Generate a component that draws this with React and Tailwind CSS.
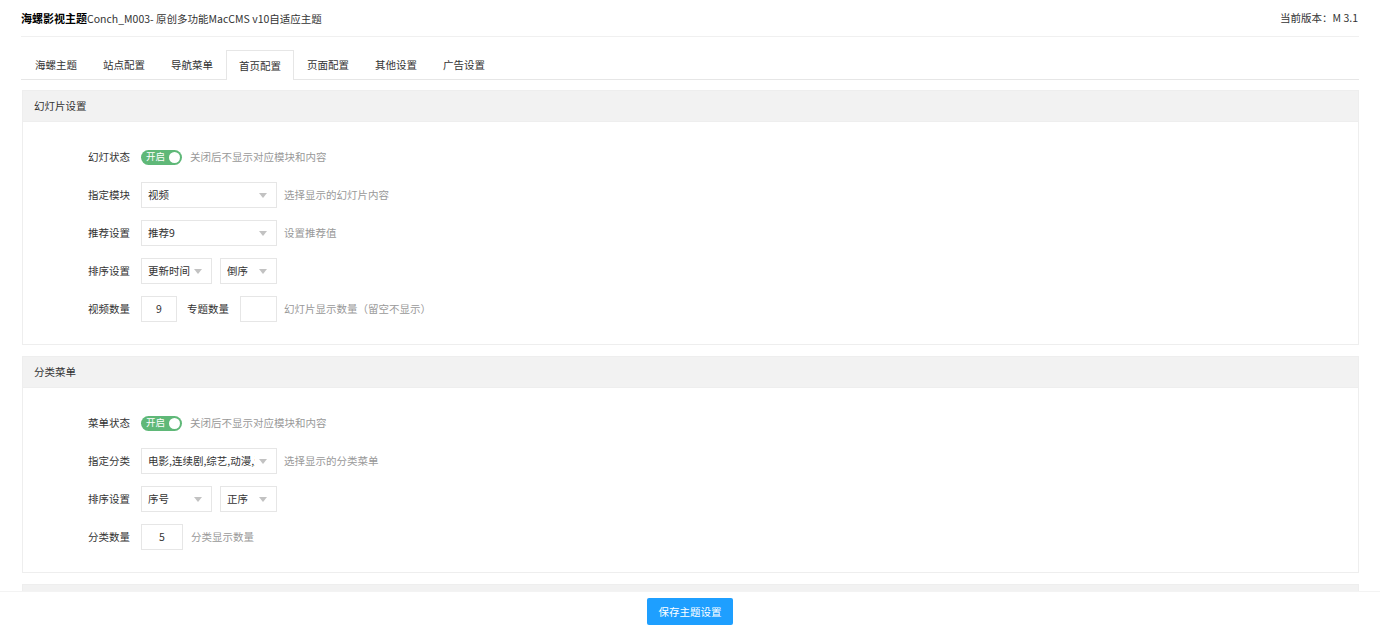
import React from "react";

const font = { fontFamily: '"Noto Sans CJK SC", "Microsoft YaHei", sans-serif' };

function Label({ children }) {
  return (
    <div className="w-[118px] shrink-0 pr-[11px] text-right text-[10.5px] text-[#333]">{children}</div>
  );
}

function Help({ children, className = "" }) {
  return <div className={"text-[10.5px] text-[#999] " + className}>{children}</div>;
}

function Switch() {
  return (
    <div className="flex h-[15px] w-[41px] items-center justify-between rounded-full bg-[#5FB878] pl-[5px] pr-[2px]">
      <span className="text-[9.5px] leading-none text-white">开启</span>
      <span className="h-[11px] w-[11px] rounded-full bg-white"></span>
    </div>
  );
}

function Select({ value, w }) {
  return (
    <div
      className={"flex h-[26px] items-center justify-between border border-[#e6e6e6] bg-white pl-[6px] pr-[9px] " + w}
    >
      <span className="overflow-hidden whitespace-nowrap text-[10.5px] text-[#333]">{value}</span>
      <span className="ml-[4px] h-0 w-0 shrink-0 border-l-[4px] border-r-[4px] border-t-[5px] border-l-transparent border-r-transparent border-t-[#c2c2c2]"></span>
    </div>
  );
}

function Input({ value, w }) {
  return (
    <div className={"flex h-[26px] items-center justify-center border border-[#e6e6e6] bg-white text-[10.5px] text-[#333] " + w}>
      {value}
    </div>
  );
}

function Row({ label, children }) {
  return (
    <div className="flex h-[26px] items-center">
      <Label>{label}</Label>
      {children}
    </div>
  );
}

function Panel({ title, children }) {
  return (
    <div className="border border-[#eeeeee] bg-white">
      <div className="flex h-[31px] items-center border-b border-[#eeeeee] bg-[#f2f2f2] pl-[11px] text-[10.5px] text-[#333]">
        {title}
      </div>
      <div className="flex flex-col gap-[12px] pb-[22px] pt-[22px]">{children}</div>
    </div>
  );
}

export default function App() {
  const tabs = ["海螺主题", "站点配置", "导航菜单", "首页配置", "页面配置", "其他设置", "广告设置"];
  return (
    <div className="flex h-screen flex-col overflow-hidden bg-white" style={font}>
      <div className="flex-1 overflow-hidden px-[21px]">
        <div className="flex h-[37px] items-center justify-between border-b border-[#f0f0f0]">
          <div className="text-[10.5px] text-[#333]">
            <span className="text-[11px] font-bold text-black">海螺影视主题</span>Conch_M003- 原创多功能MacCMS v10自适应主题
          </div>
          <div className="pr-[1px] text-[10.5px] text-[#333]">当前版本：M 3.1</div>
        </div>
        <div className="mt-[13px] flex h-[30px] border-b border-[#e6e6e6] pl-[1px]">
          {tabs.map((t, i) =>
            i === 3 ? (
              <div
                key={t}
                className="-mb-px flex h-[30px] w-[68px] items-center justify-center border border-b-0 border-[#e6e6e6] bg-white text-[10.5px] text-[#333]"
              >
                {t}
              </div>
            ) : (
              <div key={t} className="flex h-[29px] w-[68px] items-center justify-center text-[10.5px] text-[#333]">
                {t}
              </div>
            )
          )}
        </div>
        <div className="mt-[10px] flex flex-col gap-[11px] pl-[1px]">
          <Panel title="幻灯片设置">
            <Row label="幻灯状态">
              <Switch />
              <Help className="ml-[8px]">关闭后不显示对应模块和内容</Help>
            </Row>
            <Row label="指定模块">
              <Select value="视频" w="w-[136px]" />
              <Help className="ml-[7px]">选择显示的幻灯片内容</Help>
            </Row>
            <Row label="推荐设置">
              <Select value="推荐9" w="w-[136px]" />
              <Help className="ml-[7px]">设置推荐值</Help>
            </Row>
            <Row label="排序设置">
              <Select value="更新时间" w="w-[71px]" />
              <div className="w-[8px]"></div>
              <Select value="倒序" w="w-[57px]" />
            </Row>
            <Row label="视频数量">
              <Input value="9" w="w-[36px]" />
              <div className="ml-[10px] mr-[11px] text-[10.5px] text-[#333]">专题数量</div>
              <Input value="" w="w-[37px]" />
              <Help className="ml-[7px]">幻灯片显示数量（留空不显示）</Help>
            </Row>
          </Panel>
          <Panel title="分类菜单">
            <Row label="菜单状态">
              <Switch />
              <Help className="ml-[8px]">关闭后不显示对应模块和内容</Help>
            </Row>
            <Row label="指定分类">
              <Select value="电影,连续剧,综艺,动漫,资讯" w="w-[136px]" />
              <Help className="ml-[7px]">选择显示的分类菜单</Help>
            </Row>
            <Row label="排序设置">
              <Select value="序号" w="w-[71px]" />
              <div className="w-[8px]"></div>
              <Select value="正序" w="w-[57px]" />
            </Row>
            <Row label="分类数量">
              <Input value="5" w="w-[42px]" />
              <Help className="ml-[8px]">分类显示数量</Help>
            </Row>
          </Panel>
          <Panel title="其他模块">
            <Row label="模块状态">
              <Switch />
            </Row>
          </Panel>
        </div>
      </div>
      <div className="flex h-[42px] shrink-0 items-start justify-center border-t border-[#f3f3f3] bg-white pt-[6px]">
        <button className="flex h-[27px] w-[86px] items-center justify-center rounded-[2px] bg-[#1E9FFF] text-[10.5px] text-white">
          保存主题设置
        </button>
      </div>
    </div>
  );
}
